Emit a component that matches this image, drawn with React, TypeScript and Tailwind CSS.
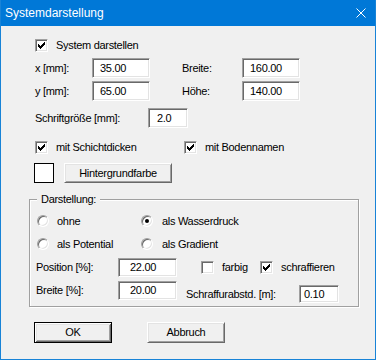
import type { ReactNode } from 'react'
import clsx from 'clsx'

const sunken =
  'border border-t-[#a0a0a0] border-l-[#a0a0a0] border-b-white border-r-white shadow-[inset_1px_1px_0_#696969,inset_-1px_-1px_0_#e3e3e3]'

function CheckBox({ checked }: { checked?: boolean }) {
  return (
    <span className={clsx('relative block h-[13px] w-[13px] shrink-0 bg-white', sunken)}>
      {checked && (
        <svg className="absolute left-[2px] top-[2px]" width="7" height="7" viewBox="0 0 7 7">
          <path
            d="M0 2h1v3h-1zM1 3h1v3h-1zM2 4h1v3h-1zM3 3h1v3h-1zM4 2h1v3h-1zM5 1h1v3h-1zM6 0h1v3h-1z"
            fill="#000"
          />
        </svg>
      )}
    </span>
  )
}

function Radio({ checked }: { checked?: boolean }) {
  return (
    <span
      className={clsx(
        'flex h-[12px] w-[12px] shrink-0 items-center justify-center rounded-full border bg-white',
        'border-t-[#a0a0a0] border-l-[#a0a0a0] border-b-white border-r-white shadow-[inset_1px_1px_0_#696969,inset_-1px_-1px_0_#e3e3e3]'
      )}
    >
      {checked && <span className="block h-[4px] w-[4px] rounded-full bg-black" />}
    </span>
  )
}

function Edit({ value, className }: { value: string; className: string }) {
  return (
    <div className={clsx('flex shrink-0 items-center bg-white', sunken, className)}>
      {value}
    </div>
  )
}

function Button({ children, primary, className }: { children: ReactNode; primary?: boolean; className: string }) {
  return (
    <button
      className={clsx(
        'flex shrink-0 items-center justify-center bg-[#f0f0f0] text-black',
        primary
          ? 'border border-black shadow-[inset_1px_1px_0_#fff,inset_-1px_-1px_0_#696969,inset_2px_2px_0_#e3e3e3,inset_-2px_-2px_0_#a0a0a0]'
          : 'border border-t-white border-l-white border-b-[#696969] border-r-[#696969] shadow-[inset_1px_1px_0_#e3e3e3,inset_-1px_-1px_0_#a0a0a0]',
        className
      )}
    >
      {children}
    </button>
  )
}

export default function App() {
  return (
    <div className="flex h-[360px] w-[376px] flex-col border-x border-b border-[#1883d7] bg-[#f0f0f0] font-['Liberation_Sans',Arial,sans-serif] text-[11px] leading-[13px] tracking-[-0.3px] text-black">
      <div className="flex h-[26px] shrink-0 items-center justify-between bg-[#0078d7] pl-[4px] pr-[9px] text-[12px] tracking-normal text-white">
        <span>Systemdarstellung</span>
        <svg width="10" height="10" viewBox="0 0 10 10">
          <path d="M0.5 0.5L9.5 9.5M9.5 0.5L0.5 9.5" stroke="#fff" strokeWidth="1" />
        </svg>
      </div>

      <div className="flex flex-col pl-[34px]">
        <div className="mt-[13px] flex h-[13px] items-center gap-[8px]">
          <CheckBox checked />
          <span>System darstellen</span>
        </div>

        <div className="mt-[6px] flex h-[20px] items-center">
          <span className="w-[57px]">x [mm]:</span>
          <Edit value="35.00" className="h-[20px] w-[58px] pl-[7px]" />
          <span className="ml-[32px] w-[60px]">Breite:</span>
          <Edit value="160.00" className="h-[20px] w-[58px] pl-[7px]" />
        </div>

        <div className="mt-[3px] flex h-[20px] items-center">
          <span className="w-[57px]">y [mm]:</span>
          <Edit value="65.00" className="h-[20px] w-[58px] pl-[7px]" />
          <span className="ml-[32px] w-[60px]">Höhe:</span>
          <Edit value="140.00" className="h-[20px] w-[58px] pl-[7px]" />
        </div>

        <div className="mt-[7px] flex h-[20px] items-center">
          <span className="w-[113px]">Schriftgröße [mm]:</span>
          <Edit value="2.0" className="h-[20px] w-[40px] pl-[8px]" />
        </div>

        <div className="mt-[13px] flex h-[13px] items-center">
          <div className="flex w-[149px] items-center gap-[8px]">
            <CheckBox checked />
            <span>mit Schichtdicken</span>
          </div>
          <div className="flex items-center gap-[8px]">
            <CheckBox checked />
            <span>mit Bodennamen</span>
          </div>
        </div>

        <div className="-ml-[1px] mt-[9px] flex h-[20px] items-center gap-[10px]">
          <span className="block h-[20px] w-[20px] border border-black bg-white" />
          <Button className="h-[20px] w-[108px]">Hintergrundfarbe</Button>
        </div>

        <div className="relative -ml-[6px] mt-[16px] w-[330px] border border-[#a0a0a0] pb-[6px] pl-[7px] pt-[15px] shadow-[inset_1px_1px_0_#fff,1px_1px_0_#fff]">
          <span className="absolute -top-[7px] left-[7px] bg-[#f0f0f0] px-[4px] leading-[13px]">Darstellung:</span>

          <div className="flex h-[12px] items-center">
            <div className="flex w-[104px] items-center gap-[8px]">
              <Radio />
              <span>ohne</span>
            </div>
            <div className="flex items-center gap-[9px]">
              <Radio checked />
              <span>als Wasserdruck</span>
            </div>
          </div>

          <div className="mt-[11px] flex h-[12px] items-center">
            <div className="flex w-[104px] items-center gap-[8px]">
              <Radio />
              <span>als Potential</span>
            </div>
            <div className="flex items-center gap-[9px]">
              <Radio checked={false} />
              <span>als Gradient</span>
            </div>
          </div>

          <div className="-ml-[1px] mt-[8px] flex h-[19px] items-center">
            <span className="w-[82px]">Position [%]:</span>
            <Edit value="22.00" className="h-[19px] w-[59px] pl-[11px]" />
            <div className="ml-[24px] flex w-[59px] items-center gap-[8px]">
              <CheckBox />
              <span>farbig</span>
            </div>
            <div className="flex items-center gap-[8px]">
              <CheckBox checked />
              <span>schraffieren</span>
            </div>
          </div>

          <div className="-ml-[1px] mt-[4px] flex h-[19px] items-center">
            <span className="w-[82px]">Breite [%]:</span>
            <Edit value="20.00" className="h-[19px] w-[59px] pl-[11px]" />
            <div className="ml-[9px] mt-[3px] flex h-[20px] items-center self-start">
              <span className="w-[113px]">Schraffurabstd. [m]:</span>
              <Edit value="0.10" className="h-[18px] w-[40px] pl-[4px]" />
            </div>
          </div>
        </div>

        <div className="-ml-[1px] mt-[15px] flex items-center gap-[35px]">
          <Button primary className="h-[21px] w-[78px]">OK</Button>
          <Button className="h-[21px] w-[78px]">Abbruch</Button>
        </div>
      </div>
    </div>
  )
}
